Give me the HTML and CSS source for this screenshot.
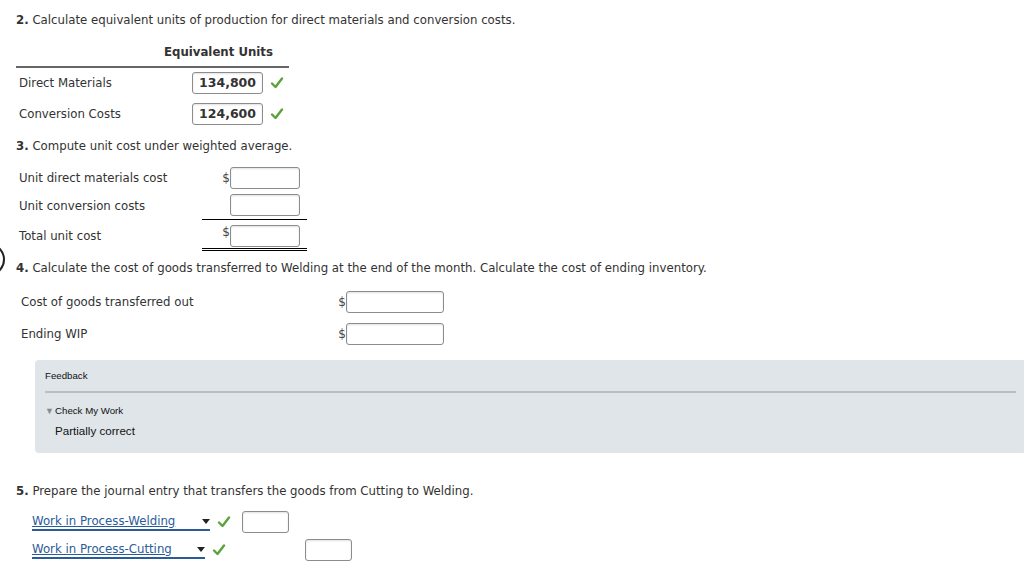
FILE: index.html
```html
<!DOCTYPE html>
<html>
<head>
<meta charset="utf-8">
<link rel="stylesheet" href="styles.css">
</head>
<body>
<div class="page">
  <section class="q q2">
    <p class="qtitle"><b>2.</b> Calculate equivalent units of production for direct materials and conversion costs.</p>
    <div class="eu-table">
      <div class="eu-head">Equivalent Units</div>
      <div class="eu-row first">
        <span class="eu-label">Direct Materials</span>
        <span class="box filled">134,800</span>
        <svg class="check" viewBox="0 0 14 14"><path d="M2 7.5 L5.5 11 L12 2.5" /></svg>
      </div>
      <div class="eu-row">
        <span class="eu-label">Conversion Costs</span>
        <span class="box filled">124,600</span>
        <svg class="check" viewBox="0 0 14 14"><path d="M2 7.5 L5.5 11 L12 2.5" /></svg>
      </div>
    </div>
  </section>

  <section class="q q3">
    <p class="qtitle"><b>3.</b> Compute unit cost under weighted average.</p>
    <div class="uc-row">
      <span class="uc-label">Unit direct materials cost</span>
      <span class="uc-cell"><span class="dollar">$</span><span class="box uc-box"></span></span>
    </div>
    <div class="uc-row sub">
      <span class="uc-label">Unit conversion costs</span>
      <span class="uc-cell"><span class="dollar"></span><span class="box uc-box"></span></span>
    </div>
    <div class="uc-row total">
      <span class="uc-label">Total unit cost</span>
      <span class="uc-cell"><span class="dollar">$</span><span class="box uc-box"></span></span>
    </div>
  </section>

  <section class="q q4">
    <span class="marker"></span>
    <p class="qtitle"><b>4.</b> Calculate the cost of goods transferred to Welding at the end of the month. Calculate the cost of ending inventory.</p>
    <div class="ci-row">
      <span class="ci-label">Cost of goods transferred out</span>
      <span class="dollar">$</span><span class="box ci-box"></span>
    </div>
    <div class="ci-row">
      <span class="ci-label">Ending WIP</span>
      <span class="dollar">$</span><span class="box ci-box"></span>
    </div>
  </section>

  <div class="feedback">
    <div class="fb-title">Feedback</div>
    <div class="fb-rule"></div>
    <div class="fb-check"><span class="tri">&#9660;</span>Check My Work</div>
    <div class="fb-result">Partially correct</div>
  </div>

  <section class="q q5">
    <p class="qtitle"><b>5.</b> Prepare the journal entry that transfers the goods from Cutting to Welding.</p>
    <div class="je-row">
      <span class="sel sel1">Work in Process-Welding<span class="arrow"></span></span>
      <svg class="check" viewBox="0 0 14 14"><path d="M2 7.5 L5.5 11 L12 2.5" /></svg>
      <span class="box je-box debit"></span>
    </div>
    <div class="je-row">
      <span class="sel sel2">Work in Process-Cutting<span class="arrow"></span></span>
      <svg class="check" viewBox="0 0 14 14"><path d="M2 7.5 L5.5 11 L12 2.5" /></svg>
      <span class="box je-box credit"></span>
    </div>
  </section>
</div>
</body>
</html>
```

FILE: styles.css
```css
* { box-sizing: border-box; }
html, body { margin: 0; padding: 0; background: #fff; }
body {
  font-family: "DejaVu Sans", Verdana, sans-serif;
  font-size: 11.75px;
  color: #333;
  overflow: hidden;
}
.page { position: relative; padding: 12px 0 0 16px; }
.qtitle { margin: 0; line-height: 16px; height: 16px; white-space: nowrap; }
.qtitle b { color: #333; }

.box {
  display: inline-block;
  height: 22px;
  border: 1px solid #8c8c8c;
  border-radius: 3px;
  background: #fff;
  box-shadow: inset 0 1px 2px rgba(0,0,0,0.12);
}
.box.filled {
  width: 71px;
  font-weight: bold;
  text-align: right;
  padding: 0 6px;
  line-height: 20px;
  font-size: 12.5px;
  color: #333;
}
.check { width: 14px; height: 14px; flex: none; }
.check path { fill: none; stroke: #5aa33c; stroke-width: 2.4; stroke-linecap: round; stroke-linejoin: round; }

/* Q2 */
.eu-table { width: 273px; margin-top: 16px; }
.eu-head {
  font-weight: bold;
  text-align: right;
  padding-right: 16px;
  line-height: 16px;
  padding-bottom: 6px;
  border-bottom: 2px solid #666;
}
.eu-row { display: flex; align-items: center; height: 31px; }
.eu-row.first { margin-top: -1px; }
.eu-label { width: 176px; padding-left: 3px; }
.eu-row .check { margin-left: 7px; }

/* Q3 */
.q3 { margin-top: 9px; }
.q3 .qtitle { margin-bottom: 10px; }
.uc-row { display: flex; align-items: center; height: 28px; }
.uc-label { width: 186px; padding-left: 3px; }
.uc-cell {
  display: flex; align-items: center; justify-content: flex-end;
  width: 105px; height: 28px;
  padding-right: 7px;
}
.uc-row.sub .uc-cell { border-bottom: 1px solid #000; align-items: flex-start; padding-top: 2px; }
.uc-row.total { height: 31px; padding-top: 1px; }
.uc-row.total .uc-cell { border-bottom: 3px double #000; height: 30px; padding-top: 4px; align-items: flex-start; }
.dollar { width: 8px; font-size: 12px; color: #444; text-align: right; }
.uc-box { width: 70px; }

/* Q4 */
.q4 { margin-top: 9px; }
.marker {
  position: absolute;
  left: -24px; top: 244px;
  width: 29px; height: 31px;
  border: 2px solid #222;
  border-radius: 50%;
}
.ci-row { display: flex; align-items: center; height: 32px; padding-left: 5px; }
.q4 .qtitle { margin-bottom: 10px; }
.ci-label { width: 317px; }
.ci-box { width: 98px; }

/* Feedback */
.feedback {
  margin: 10px -2px 0 19px;
  height: 93px;
  background: #dfe5e9;
  border-radius: 4px;
  padding: 10px 10px 0 10px;
  font-family: "Liberation Sans", Arial, sans-serif;
  color: #111;
}
.fb-title { font-size: 9.7px; line-height: 12px; }
.fb-rule { height: 2px; background: #b8bec2; margin-top: 9px; }
.fb-check { font-size: 9.7px; line-height: 12px; margin-top: 12px; }
.tri { color: #8a8a8a; font-size: 9px; display: inline-block; width: 10px; vertical-align: 0; }
.fb-result { font-size: 11.6px; line-height: 14px; margin-top: 7px; padding-left: 10px; }

/* Q5 */
.q5 { margin-top: 30px; }
.q5 .qtitle { margin-bottom: 9px; }
.je-row { display: flex; align-items: center; height: 28px; padding-left: 16px; }
.sel {
  position: relative;
  display: inline-block;
  color: #2b5c99;
  line-height: 15px;
  border-bottom: 2px solid #2b5c99;
  text-decoration: underline;
  text-underline-offset: 1px;
}
.sel1 { width: 178px; }
.sel2 { width: 173px; }
.arrow {
  position: absolute; right: 0; top: 5px;
  width: 0; height: 0;
  border-left: 4px solid transparent;
  border-right: 4px solid transparent;
  border-top: 5px solid #222;
}
.je-row .check { margin-left: 7px; margin-right: 11px; }
.je-box { width: 47px; height: 22px; }
.je-box.credit { margin-left: 68px; }
```
